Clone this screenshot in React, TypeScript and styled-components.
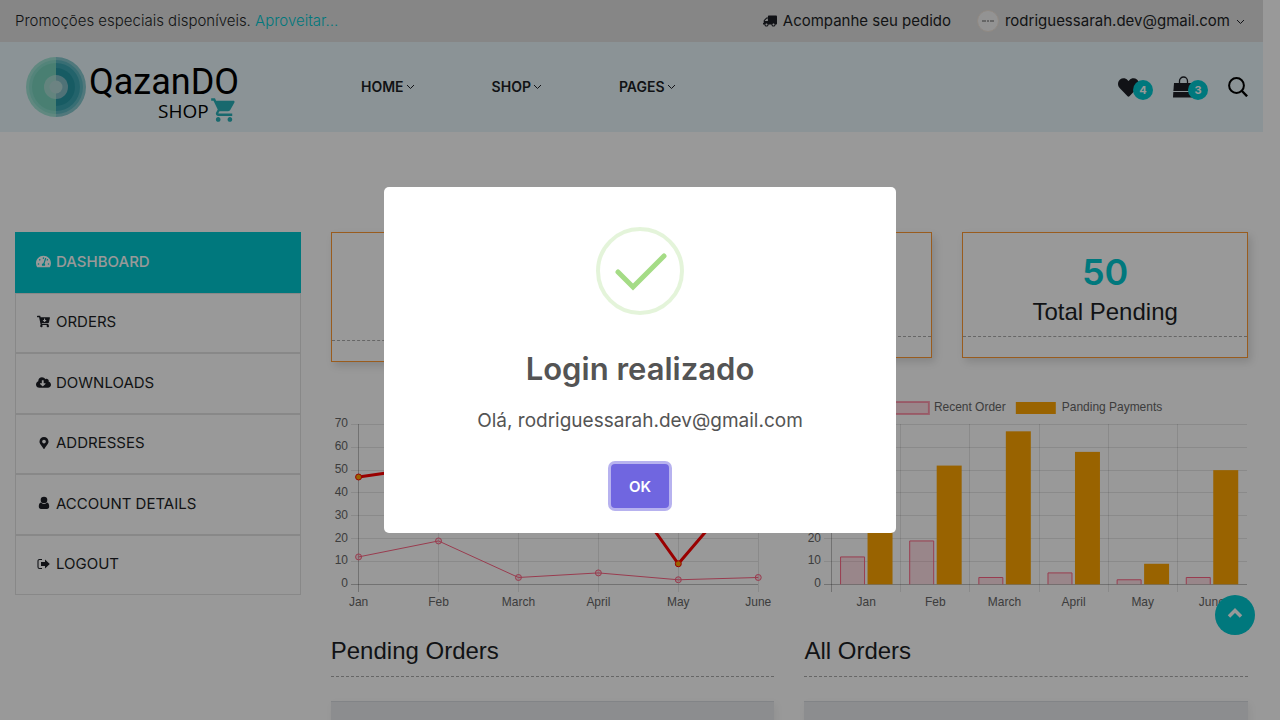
import React from "react";
import styled, { createGlobalStyle } from "styled-components";
import {
  FaTruck,
  FaTachometerAlt,
  FaCartArrowDown,
  FaCloudDownloadAlt,
  FaMapMarkerAlt,
  FaHeart,
} from "react-icons/fa";

const sans = '"Inter", "Open Sans", sans-serif';
const arial = '"Liberation Sans", Arial, sans-serif';
const teal = "#00c8d0";
const ink = "#1d1f26";

const GlobalStyle = createGlobalStyle`
  *, *::before, *::after { box-sizing: border-box; }
  body {
    margin: 0;
    height: 100vh;
    overflow: hidden;
    background: #fff;
    color: ${ink};
    font-family: ${sans};
    font-size: 15px;
  }
  h1, h2, h3, p, ul { margin: 0; padding: 0; }
  ul { list-style: none; }
  a { color: inherit; text-decoration: none; }
  button { font-family: inherit; cursor: pointer; }
`;

const Page = styled.div`
  height: 100vh;
  overflow: hidden;
  padding-right: 17px;
`;

const TopBar = styled.div`
  display: flex;
  align-items: center;
  justify-content: space-between;
  height: 42px;
  padding: 0 18px 0 15px;
  background: #dfdfdf;
  font-weight: 300;
  line-height: 20px;
`;

const PromoLink = styled.a`
  color: ${teal};
`;

const TopLinks = styled.div`
  display: flex;
  align-items: center;
  gap: 26px;
  font-weight: 400;
`;

const TopLink = styled.a`
  display: flex;
  align-items: center;
  gap: 6px;
`;

const TruckIcon = styled(FaTruck)`
  transform: scaleX(-1);
`;

const Avatar = styled.span`
  display: flex;
  align-items: center;
  justify-content: center;
  gap: 1px;
  width: 22px;
  height: 22px;
  border: 1px solid #efe4da;
  border-radius: 50%;
  background: #f6f6f6;
`;

const AvatarMark = styled.i<{ $wide?: boolean }>`
  width: ${(p) => (p.$wide ? 4 : 2)}px;
  height: 2px;
  background: #aaa;
`;

const Header = styled.header`
  display: flex;
  align-items: center;
  height: 90px;
  padding: 0 15px;
  background: #e8f6fa;
`;

const LogoLink = styled.a`
  display: block;
  width: 230px;
  height: 80px;
  margin-right: 116px;
`;

const Nav = styled.nav`
  display: flex;
  gap: 77px;
`;

const NavLink = styled.a`
  display: flex;
  align-items: center;
  gap: 2px;
  padding-bottom: 2px;
  font-size: 14px;
  font-weight: 600;
`;

const Tools = styled.div`
  display: flex;
  align-items: center;
  gap: 20px;
  margin-left: auto;
`;

const ToolButton = styled.button<{ $counted?: boolean }>`
  position: relative;
  display: flex;
  align-items: center;
  width: ${(p) => (p.$counted ? 35 : 20)}px;
  height: 26px;
  padding: 0;
  border: 0;
  background: none;
  color: ${ink};
`;

const Count = styled.span`
  position: absolute;
  right: 0;
  bottom: 0;
  width: 20px;
  height: 20px;
  border-radius: 50%;
  background: ${teal};
  color: #fff;
  font-size: 11px;
  font-weight: 700;
  line-height: 20px;
  text-align: center;
`;

const Content = styled.main`
  display: grid;
  grid-template-columns: repeat(4, minmax(0, 1fr));
  gap: 30px;
  align-items: start;
  padding: 100px 15px 0;
`;

const Menu = styled.ul`
  display: grid;
  grid-auto-rows: 1fr;
  min-height: 363px;
`;

const MenuItem = styled.li<{ $active?: boolean }>`
  border: 1px solid ${(p) => (p.$active ? teal : "#e3e3e3")};
  background: ${(p) => (p.$active ? teal : "transparent")};
  color: ${(p) => (p.$active ? "#fff" : ink)};
  font-weight: ${(p) => (p.$active ? 500 : 400)};
`;

const MenuLink = styled.a`
  display: flex;
  align-items: center;
  gap: 5px;
  height: 100%;
  padding: 0 20px 2px;
`;

const MenuIcon = styled.span`
  display: flex;
  justify-content: center;
  width: 15px;
  font-size: 15px;
`;

const Main = styled.div`
  grid-column: span 3;
`;

const Stats = styled.div`
  display: grid;
  grid-template-columns: repeat(3, minmax(0, 1fr));
  gap: 30px;
  align-items: start;
  min-height: 130px;
`;

const StatCard = styled.section`
  padding: 20px 0;
  border: 1px solid #ff9933;
  box-shadow: 3px 4px 8px rgba(0, 0, 0, 0.13);
  text-align: center;
`;

const StatBody = styled.div<{ $tall?: boolean }>`
  height: ${(p) => (p.$tall ? 88 : 84)}px;
  border-bottom: 1px dashed #aaa;
`;

const StatValue = styled.p`
  color: ${teal};
  font-size: 36px;
  font-weight: 600;
  line-height: 38px;
`;

const StatLabel = styled.h2`
  font-family: ${arial};
  font-size: 24px;
  font-weight: 400;
  line-height: 42px;
`;

const Halves = styled.div`
  display: grid;
  grid-template-columns: repeat(2, minmax(0, 1fr));
  gap: 30px;
  padding-top: 30px;
`;

const Chart = styled.svg`
  display: block;
  width: 100%;
  height: auto;
  font-family: ${arial};
  font-size: 12px;
`;

const SectionTitle = styled.h2`
  margin: 22px 0 24px;
  padding-bottom: 11px;
  border-bottom: 1px dashed #aaa;
  font-family: ${arial};
  font-size: 24px;
  font-weight: 400;
  line-height: 29px;
`;

const OrdersTable = styled.table`
  width: 100%;
  border-collapse: collapse;
  box-shadow: 2px 3px 8px rgba(0, 0, 0, 0.06);

  th {
    height: 48px;
    border-top: 1px solid #d9dde1;
    background: #e9ecef;
  }
`;

const ScrollTop = styled.button`
  position: fixed;
  right: 25px;
  bottom: 85px;
  display: flex;
  align-items: center;
  justify-content: center;
  width: 40px;
  height: 40px;
  padding: 0 0 4px;
  border: 0;
  border-radius: 50%;
  background: ${teal};
  color: #fff;
`;

const Backdrop = styled.div`
  position: fixed;
  inset: 0;
  z-index: 10;
  display: flex;
  align-items: center;
  justify-content: center;
  background: rgba(0, 0, 0, 0.4);
`;

const Dialog = styled.section`
  display: flex;
  flex-direction: column;
  align-items: center;
  width: 100%;
  max-width: 512px;
  padding: 40px 20px 25px;
  border-radius: 5px;
  background: #fff;
  color: #545454;
`;

const DialogTitle = styled.h1`
  margin-top: 34px;
  font-size: 31px;
  font-weight: 600;
  line-height: 40px;
`;

const DialogText = styled.p`
  margin: 20px 0 31px;
  font-size: 19px;
  font-weight: 400;
  line-height: 24px;
`;

const OkButton = styled.button`
  width: 58px;
  height: 44px;
  padding: 0;
  border: 0;
  border-radius: 4px;
  outline: none;
  background: #7066e0;
  box-shadow: 0 0 0 3px rgba(112, 102, 224, 0.5);
  color: #fff;
  font-size: 15px;
  font-weight: 600;
`;

const ChevronDown = () => (
  <svg width="9" height="9" viewBox="0 0 9 9" fill="none" stroke="currentColor" aria-hidden="true">
    <path d="M1 3l3.5 3.5L8 3" />
  </svg>
);

const UserIcon = () => (
  <svg width="12" height="14" viewBox="0 0 12 14" fill="currentColor" aria-hidden="true">
    <circle cx="6" cy="4" r="3.3" />
    <path d="M3 6.4C1.2 6.6.8 8.6.8 10.6.8 12 1.6 13 3 13h6c1.400 0 2.200-1 2.200-2.400 0-2-.4-4-2.200-4.200C8.200 7.300 7.200 7.900 6 7.900S3.800 7.300 3 6.400z" />
  </svg>
);

const SignOutIcon = () => (
  <svg width="13" height="12" viewBox="0 0 13 12" aria-hidden="true">
    <path d="M5 1.500H2.500A1.500 1.500 0 0 0 1 3v6a1.500 1.500 0 0 0 1.500 1.500H5" fill="none" stroke="currentColor" strokeWidth="1.100" />
    <path d="M4 4h4V1.500L12.800 6 8 10.500V8H4z" fill="currentColor" />
  </svg>
);

const BagIcon = () => (
  <svg width="20" height="22" viewBox="0 0 20 22" aria-hidden="true">
    <path d="M6.500 9V5a4 4 0 0 1 8 0v4" fill="none" stroke="currentColor" strokeWidth="1.300" />
    <path d="M1 7h18l.6 8H.4z" fill="currentColor" />
    <path d="M.3 16h19.400l.3 5.500H0z" fill="currentColor" />
  </svg>
);

const SearchIcon = () => (
  <svg width="20" height="20" viewBox="0 0 20 20" fill="none" stroke="#000" strokeWidth="2" aria-hidden="true">
    <circle cx="8.500" cy="8.500" r="7.400" />
    <path d="M13.500 13.500l5.600 5.800" strokeWidth="2.400" />
  </svg>
);

const Logo = () => (
  <svg width="230" height="80" viewBox="0 0 230 80" role="img" aria-label="Qazando Shop">
    <g transform="translate(41 40)">
      <path d="M0-30a30 30 0 0 0 0 60z" fill="#a0e3d5" />
      <path d="M0-30a30 30 0 0 1 0 60z" fill="#85c8cf" />
      <path d="M0-27a27 27 0 0 0 0 54z" fill="#8bdccb" />
      <path d="M0-27a27 27 0 0 1 0 54z" fill="#5eb8c2" />
      <path d="M0-24a24 24 0 0 0 0 48z" fill="#7ad4bf" />
      <path d="M0-24a24 24 0 0 1 0 48z" fill="#3ba6b2" />
      <path d="M0-19a19 19 0 0 1 0 38z" fill="#2798a6" />
      <path d="M0-12a12 12 0 0 0 0 24z" fill="#a6ddd2" />
      <path d="M0-12a12 12 0 0 1 0 24z" fill="#86bec7" />
      <circle r="6.500" fill="#b5dad9" />
    </g>
    <g fill="#000">
      <text x="74" y="47" fontFamily='"Roboto", sans-serif' fontSize="36">QazanDO</text>
      <text x="143" y="71" fontFamily='"Open Sans", sans-serif' fontSize="19">SHOP</text>
    </g>
    <path
      transform="translate(195 49) scale(1.170)"
      fill="#29b0b8"
      d="M7 18c-1.100 0-1.990.9-1.990 2S5.900 22 7 22s2-.9 2-2-.9-2-2-2zM1 2v2h2l3.600 7.590-1.350 2.450c-.16.28-.25.61-.25.96 0 1.100.9 2 2 2h12v-2H7.420c-.14 0-.25-.11-.25-.25l.03-.12.9-1.630h7.450c.75 0 1.410-.41 1.750-1.030l3.580-6.490c.08-.14.12-.31.12-.48 0-.55-.45-1-1-1H5.210l-.94-2H1zm16 16c-1.100 0-1.990.9-1.990 2s.89 2 1.990 2 2-.9 2-2-.9-2-2-2z"
    />
  </svg>
);

const months = ["Jan", "Feb", "March", "April", "May", "June"];
const recent = [12, 19, 3, 5, 2, 3];
const pending = [47, 52, 67, 58, 9, 50];
const ticks = [0, 10, 20, 30, 40, 50, 60, 70];

const plotTop = 32.5;
const plotBottom = 192.5;
const plotLeft = 27.6;
const yOf = (v: number) => plotBottom - (v * (plotBottom - plotTop)) / 70;

const Legend = () => (
  <g fill="#666">
    <rect x="85" y="10" width="40" height="12" fill="#ffe0e6" stroke="#ff6384" strokeOpacity="0.6" strokeWidth="2" />
    <text x="130" y="19">Recent Order</text>
    <rect x="212" y="10" width="40" height="12" fill="orange" />
    <text x="258" y="19">Panding Payments</text>
  </g>
);

const Grid = ({ right, step, count }: { right: number; step: number; count: number }) => (
  <g shapeRendering="crispEdges">
    {ticks.map((t) => (
      <line key={t} x1={plotLeft - 8} x2={right} y1={yOf(t)} y2={yOf(t)} stroke="#000" strokeOpacity={t ? 0.1 : 0.25} />
    ))}
    {Array.from({ length: count }, (_, i) => (
      <line
        key={i}
        x1={plotLeft + i * step}
        x2={plotLeft + i * step}
        y1={plotTop}
        y2={plotBottom + 8}
        stroke="#000"
        strokeOpacity={i ? 0.1 : 0.25}
      />
    ))}
  </g>
);

const AxisLabels = ({ first, step }: { first: number; step: number }) => (
  <g fill="#666">
    {ticks.map((t) => (
      <text key={t} x="17" y={yOf(t) + 3} textAnchor="end">{t}</text>
    ))}
    {months.map((m, i) => (
      <text key={m} x={first + i * step} y="214" textAnchor="middle">{m}</text>
    ))}
  </g>
);

const LineChart = () => {
  const step = 80;
  const points = (data: number[]) => data.map((v, i) => `${plotLeft + i * step},${yOf(v)}`).join(" ");
  return (
    <Chart viewBox="0 0 444 222" role="img" aria-label="Orders and payments, line chart">
      <Grid right={427} step={step} count={6} />
      <polyline points={points(pending)} fill="none" stroke="red" strokeWidth="3" />
      <polyline points={points(recent)} fill="none" stroke="#ff6384" />
      {months.map((m, i) => (
        <g key={m}>
          <circle cx={plotLeft + i * step} cy={yOf(pending[i])} r="3" fill="orange" stroke="red" />
          <circle cx={plotLeft + i * step} cy={yOf(recent[i])} r="3" fill="#ff6384" fillOpacity="0.2" stroke="#ff6384" />
        </g>
      ))}
      <AxisLabels first={plotLeft} step={step} />
    </Chart>
  );
};

const BarChart = () => {
  const step = 69.2;
  return (
    <Chart viewBox="0 0 444 222" role="img" aria-label="Orders and payments, bar chart">
      <Legend />
      <Grid right={443} step={step} count={6} />
      {months.map((m, i) => {
        const x = plotLeft + i * step;
        return (
          <g key={m}>
            <path
              d={`M${x + 9} ${plotBottom}V${yOf(recent[i])}h24V${plotBottom}`}
              fill="#ff6384"
              fillOpacity="0.2"
              stroke="#ff6384"
            />
            <rect x={x + 36} y={yOf(pending[i])} width="25" height={plotBottom - yOf(pending[i])} fill="orange" />
          </g>
        );
      })}
      <AxisLabels first={plotLeft + step / 2} step={step} />
    </Chart>
  );
};

const menu = [
  { label: "DASHBOARD", icon: <FaTachometerAlt />, active: true },
  { label: "ORDERS", icon: <FaCartArrowDown size={13} /> },
  { label: "DOWNLOADS", icon: <FaCloudDownloadAlt size={15} /> },
  { label: "ADDRESSES", icon: <FaMapMarkerAlt size={12} /> },
  { label: "ACCOUNT DETAILS", icon: <UserIcon /> },
  { label: "LOGOUT", icon: <SignOutIcon /> },
];

export default function App() {
  return (
    <>
      <GlobalStyle />
      <Page>
        <TopBar>
          <p>
            Promoções especiais disponíveis. <PromoLink href="#">Aproveitar...</PromoLink>
          </p>
          <TopLinks>
            <TopLink href="#">
              <TruckIcon size={14} />
              Acompanhe seu pedido
            </TopLink>
            <TopLink href="#">
              <Avatar>
                <AvatarMark $wide />
                <AvatarMark />
                <AvatarMark $wide />
              </Avatar>
              rodriguessarah.dev@gmail.com
              <ChevronDown />
            </TopLink>
          </TopLinks>
        </TopBar>

        <Header>
          <LogoLink href="#">
            <Logo />
          </LogoLink>
          <Nav>
            {["HOME", "SHOP", "PAGES"].map((label) => (
              <NavLink key={label} href="#">
                {label}
                <ChevronDown />
              </NavLink>
            ))}
          </Nav>
          <Tools>
            <ToolButton $counted aria-label="Wishlist">
              <FaHeart size={21} />
              <Count>4</Count>
            </ToolButton>
            <ToolButton $counted aria-label="Cart">
              <BagIcon />
              <Count>3</Count>
            </ToolButton>
            <ToolButton aria-label="Search">
              <SearchIcon />
            </ToolButton>
          </Tools>
        </Header>

        <Content>
          <Menu>
            {menu.map((item) => (
              <MenuItem key={item.label} $active={item.active}>
                <MenuLink href="#">
                  <MenuIcon>{item.icon}</MenuIcon>
                  {item.label}
                </MenuLink>
              </MenuItem>
            ))}
          </Menu>

          <Main>
            <Stats>
              <StatCard>
                <StatBody $tall />
              </StatCard>
              <StatCard>
                <StatBody />
              </StatCard>
              <StatCard>
                <StatBody>
                  <StatValue>50</StatValue>
                  <StatLabel>Total Pending</StatLabel>
                </StatBody>
              </StatCard>
            </Stats>

            <Halves>
              <div>
                <LineChart />
                <SectionTitle>Pending Orders</SectionTitle>
                <OrdersTable>
                  <thead>
                    <tr>
                      <th />
                    </tr>
                  </thead>
                </OrdersTable>
              </div>
              <div>
                <BarChart />
                <SectionTitle>All Orders</SectionTitle>
                <OrdersTable>
                  <thead>
                    <tr>
                      <th />
                    </tr>
                  </thead>
                </OrdersTable>
              </div>
            </Halves>
          </Main>
        </Content>

        <ScrollTop aria-label="Back to top">
          <svg width="16" height="12" viewBox="0 0 16 12" fill="none" stroke="currentColor" strokeWidth="3.500" aria-hidden="true">
            <path d="M2 9.500l6-6 6 6" />
          </svg>
        </ScrollTop>
      </Page>

      <Backdrop>
        <Dialog role="dialog" aria-modal="true" aria-labelledby="dialog-title">
          <svg width="88" height="88" viewBox="0 0 88 88" fill="none" aria-hidden="true">
            <circle cx="44" cy="44" r="42" stroke="#a5dc86" strokeOpacity="0.3" strokeWidth="4" />
            <path d="M22 45l15 15 31-31" stroke="#a5dc86" strokeWidth="5" strokeLinecap="round" />
          </svg>
          <DialogTitle id="dialog-title">Login realizado</DialogTitle>
          <DialogText>Olá, rodriguessarah.dev@gmail.com</DialogText>
          <OkButton>OK</OkButton>
        </Dialog>
      </Backdrop>
    </>
  );
}
